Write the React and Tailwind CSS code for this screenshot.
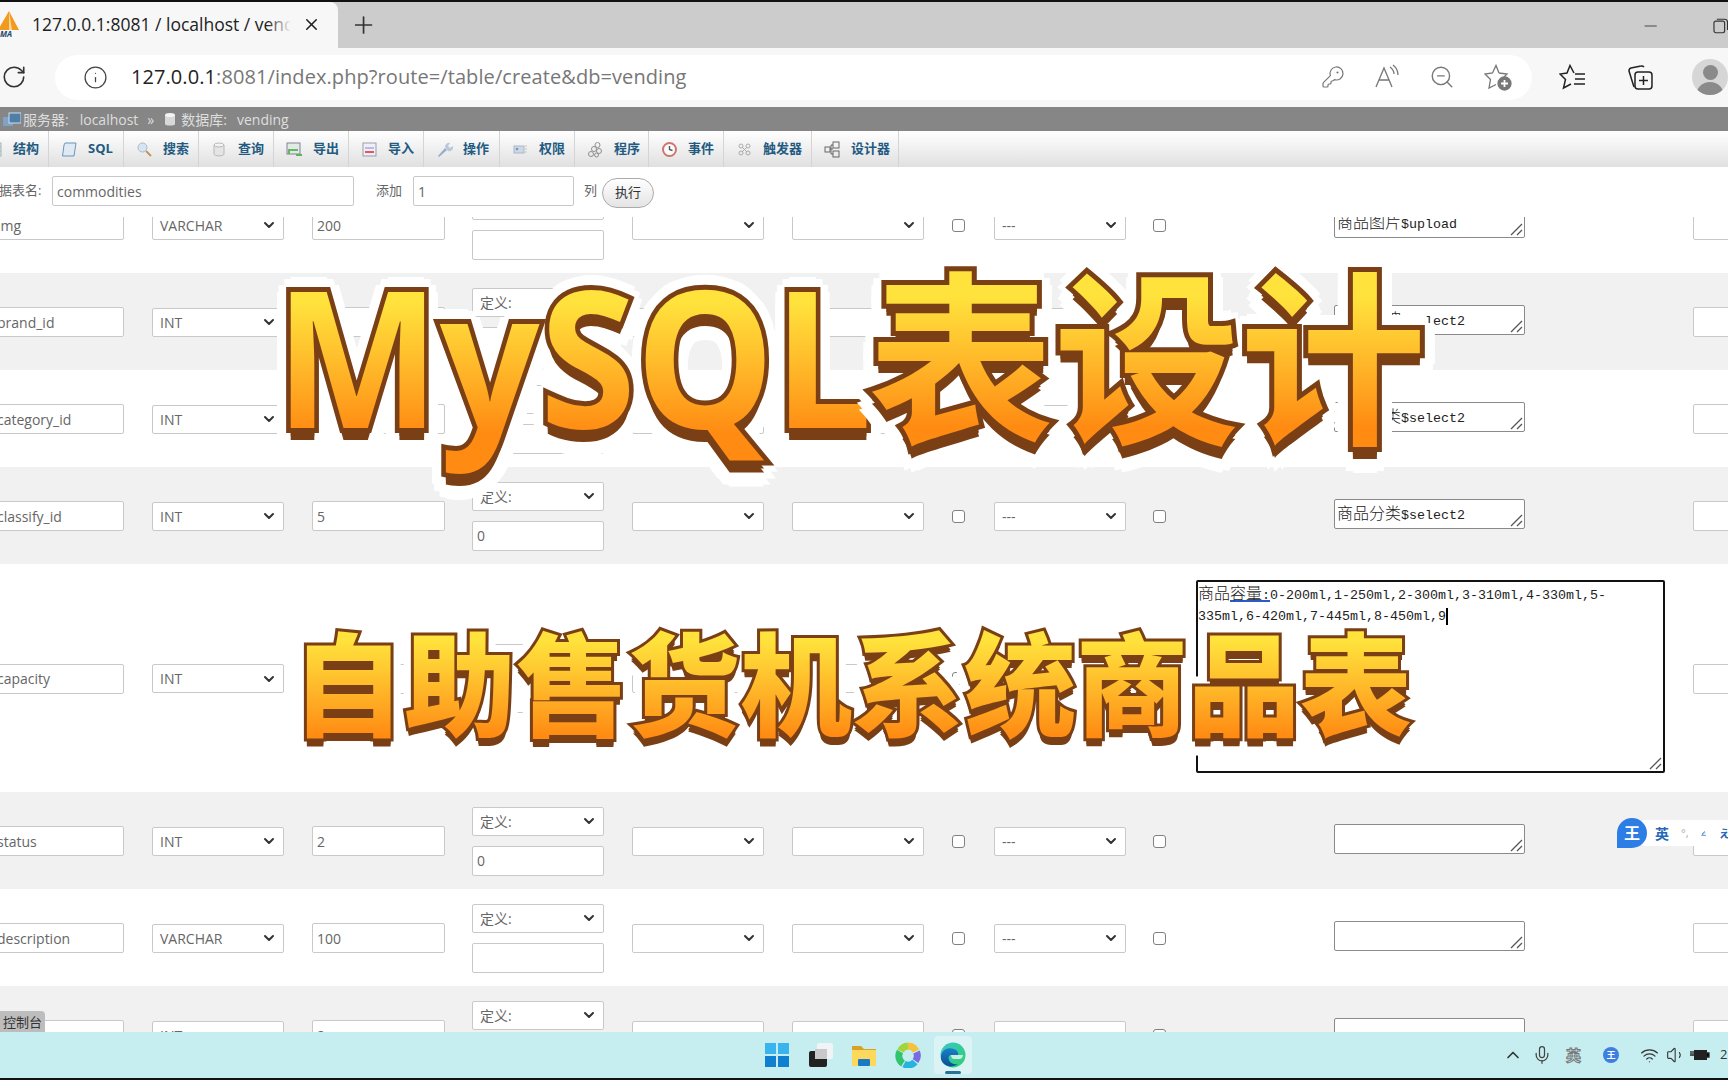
import React from "react";
import { RotateCw, Info, KeyRound, ZoomOut, Plus, X, ChevronDown, ChevronUp, Mic, Wifi, Volume1, Minus } from "lucide-react";

const sans = "font-['Open_Sans','Noto_Sans_CJK_SC',sans-serif]";

function Chevron() {
  return <ChevronDown size={16} strokeWidth={3} className="text-[#333] shrink-0" />;
}

function Sel({ text, className = "" }) {
  return (
    <div className={`h-[29px] bg-white border border-[#c9c9c9] rounded-[2px] flex items-center justify-between pl-[7px] pr-[6px] text-[14px] text-[#666] shrink-0 ${className}`}>
      <span>{text}</span>
      <Chevron />
    </div>
  );
}

function Inp({ text, className = "" }) {
  return (
    <div className={`h-[30px] bg-white border border-[#c9c9c9] rounded-[2px] flex items-center pl-[4px] text-[14px] text-[#666] shrink-0 overflow-hidden ${className}`}>
      {text}
    </div>
  );
}

function Check({ className = "" }) {
  return <div className={`w-[13px] h-[13px] bg-white border border-[#808080] rounded-[3px] shrink-0 ${className}`} />;
}

function Grip() {
  return (
    <svg width="14" height="14" viewBox="0 0 14 14" className="absolute right-[1px] bottom-[1px]">
      <path d="M2 13 L13 2 M8 13 L13 8" stroke="#555" strokeWidth="1.3" fill="none" />
    </svg>
  );
}

function Comment({ text }) {
  const m = text.match(/^([^$]*)(.*)$/);
  return (
    <div className="relative ml-[168px] mb-[4px] w-[191px] h-[30px] shrink-0 bg-white border border-[#8a8a8a] rounded-[2px] pl-[2px] leading-[24px] text-[#222] whitespace-nowrap overflow-hidden">
      <span className="text-[16px] font-['Noto_Sans_CJK_SC',sans-serif] font-light">{m[1]}</span>
      <span className="text-[13.33px] font-['Liberation_Mono',monospace]">{m[2]}</span>
      <Grip />
    </div>
  );
}

function CapacityBox() {
  const cjk = "text-[16px] font-['Noto_Sans_CJK_SC',sans-serif] font-light";
  return (
    <div className="relative ml-[30px] mb-[4px] w-[469px] h-[193px] shrink-0 bg-white border-2 border-[#111] rounded-[2px] leading-[20px] text-[13.33px] text-[#222] font-['Liberation_Mono',monospace] whitespace-nowrap">
      <div className="h-[25px]">
        <span className={cjk}>商品</span>
        <span className={`${cjk} underline decoration-[#2a5bc8] decoration-2`}>容量</span>
        <span className="underline decoration-[#2a5bc8] decoration-2">:</span>
        0-200ml,1-250ml,2-300ml,3-310ml,4-330ml,5-
      </div>
      <div className="h-[24px] flex items-start">
        335ml,6-420ml,7-445ml,8-450ml,9<span className="inline-block w-[2px] h-[17px] mt-[1px] bg-black" />
      </div>
      <Grip />
    </div>
  );
}

function Row({ name, type, len, def, defVal, comment, big, gray, h = "h-[97px]", extra = "" }) {
  return (
    <div className={`${h} shrink-0 flex items-center pt-[1px] ${gray ? "bg-[#f1f1f1]" : "bg-white"} ${extra}`}>
      <Inp text={name} className="-ml-[12px] w-[136px] pl-[8px]" />
      <Sel text={type} className="ml-[28px] w-[132px]" />
      <Inp text={len} className="ml-[28px] w-[133px]" />
      <div className="ml-[27px] w-[132px] shrink-0 flex flex-col gap-[10px]">
        <Sel text={def} className="w-[132px] text-[13px]" />
        <Inp text={defVal} className="w-[132px]" />
      </div>
      <Sel text="" className="ml-[28px] w-[132px]" />
      <Sel text="" className="ml-[28px] w-[132px]" />
      <Check className="ml-[28px]" />
      <Sel text="---" className="ml-[29px] w-[132px]" />
      <Check className="ml-[27px]" />
      {big ? <CapacityBox /> : <Comment text={comment} />}
      <Inp text="" className={`${big ? "ml-[28px]" : "ml-[168px]"} w-[100px]`} />
    </div>
  );
}

function TabIcon({ kind }) {
  const c = { width: 17, height: 17, viewBox: "0 0 17 17", className: "shrink-0 opacity-80" };
  switch (kind) {
    case "struct":
      return <svg {...c}><rect x="1" y="2" width="14" height="13" fill="#dfe6ec" stroke="#8aa" /><path d="M1 6h14M1 10h14M6 2v13" stroke="#8aa" /></svg>;
    case "sql":
      return <svg {...c}><path d="M4 2h11l-2 13H1.500L3 4z" fill="#dce9f5" stroke="#4d7fa8" /></svg>;
    case "search":
      return <svg {...c}><circle cx="6.500" cy="6.500" r="4.500" fill="#cfe3f5" stroke="#9ab" /><path d="M10 10l5 5" stroke="#b8803a" strokeWidth="2" /></svg>;
    case "db":
      return <svg {...c}><path d="M3 4v9c0 2.500 10 2.500 10 0V4z" fill="#e3e3e3" stroke="#aaa" /><ellipse cx="8" cy="4" rx="5" ry="2" fill="#f4f4f4" stroke="#aaa" /></svg>;
    case "export":
      return <svg {...c}><rect x="1" y="2" width="13" height="11" fill="#dfe9e3" stroke="#668" /><path d="M3 13V9h9" stroke="#4a4" strokeWidth="2" fill="none" /><path d="M10 14h6" stroke="#3a3" strokeWidth="2" /></svg>;
    case "import":
      return <svg {...c}><rect x="2" y="2" width="13" height="13" fill="#eef" stroke="#889" /><path d="M4 11h9" stroke="#d33" strokeWidth="2" /><path d="M4 7h9" stroke="#99c" strokeWidth="1.500" /></svg>;
    case "wrench":
      return <svg {...c}><path d="M2 15l7-8 2 2-8 7z" fill="#7f9ec2" /><path d="M9 6a4 4 0 0 1 5-4l-2 3 2 2 3-2a4 4 0 0 1-5 5z" fill="#a9bfd6" /></svg>;
    case "priv":
      return <svg {...c}><rect x="2" y="5" width="10" height="7" fill="#c5d3e6" stroke="#9ab" /><circle cx="5" cy="8" r="1.300" fill="#5a7fae" /><path d="M13 5h2M13 8h2M13 11h2" stroke="#bbb" /></svg>;
    case "routine":
      return <svg {...c} fill="none" stroke="#777"><circle cx="10.500" cy="4" r="2.500" /><circle cx="12" cy="10" r="2.500" /><circle cx="7" cy="8" r="2.500" /><circle cx="4" cy="13" r="2.500" /><circle cx="9.500" cy="14" r="2" /></svg>;
    case "clock":
      return <svg {...c}><circle cx="8.500" cy="8.500" r="6.500" fill="#fff" stroke="#c9574f" strokeWidth="2" /><path d="M8.500 5v3.500l3 1" stroke="#333" strokeWidth="1.400" fill="none" /></svg>;
    case "trigger":
      return <svg {...c} fill="none" stroke="#999"><circle cx="5" cy="5" r="2" /><circle cx="12" cy="5" r="2" /><circle cx="5" cy="12" r="2" /><circle cx="12" cy="12" r="2" /><path d="M6 6l5 5M11 6l-5 5" /></svg>;
    default:
      return <svg {...c} fill="none" stroke="#444"><rect x="1" y="6" width="5" height="5" /><rect x="9" y="1" width="6" height="6" /><rect x="9" y="10" width="6" height="6" /><path d="M6 8h3M9 4H7v9h2" /></svg>;
  }
}

const tabs = [
  ["struct", "结构", "w-[75px]"],
  ["sql", "SQL", "w-[75px]"],
  ["search", "搜索", "w-[75px]"],
  ["db", "查询", "w-[75px]"],
  ["export", "导出", "w-[75px]"],
  ["import", "导入", "w-[75px]"],
  ["wrench", "操作", "w-[76px]"],
  ["priv", "权限", "w-[75px]"],
  ["routine", "程序", "w-[74px]"],
  ["clock", "事件", "w-[75px]"],
  ["trigger", "触发器", "w-[88px]"],
  ["designer", "设计器", "w-[87px]"],
];

function FancyLine({ className, halo, extrude, fill, children }) {
  return (
    <div className={`absolute whitespace-nowrap grid ${className}`}>
      <div aria-hidden="true" className={`[grid-area:1/1] ${halo}`}>{children}</div>
      <div aria-hidden="true" className={`[grid-area:1/1] ${extrude}`}>{children}</div>
      <div className={`[grid-area:1/1] ${fill}`}>{children}</div>
    </div>
  );
}

const haloBig = "text-white [text-shadow:15px_0_0_#fff,13px_7px_0_#fff,7px_13px_0_#fff,0_15px_0_#fff,-7px_13px_0_#fff,-13px_7px_0_#fff,-15px_0_0_#fff,-13px_-7px_0_#fff,-7px_-13px_0_#fff,0_-15px_0_#fff,7px_-13px_0_#fff,13px_-7px_0_#fff,0_26px_0_#fff,13px_18px_0_#fff,-13px_18px_0_#fff,7px_24px_0_#fff,-7px_24px_0_#fff,15px_11px_0_#fff,-15px_11px_0_#fff,8px_0_0_#fff,-8px_0_0_#fff,0_8px_0_#fff,0_-8px_0_#fff]";
const extrudeBig = "text-[#7a3f14] [-webkit-text-stroke:10px_#7a3f14] [stroke-linejoin:round] [text-shadow:0_4px_0_#7a3f14,0_8px_0_#7a3f14,0_12px_0_#7a3f14]";
const fillGrad = "text-transparent bg-clip-text bg-linear-to-b from-[#ffe23c] from-30% to-[#ff8b12] to-80%";

function EdgeLogo() {
  return (
    <svg width="26" height="26" viewBox="0 0 26 26">
      <defs>
        <linearGradient id="e1" x1="0" y1="0" x2="1" y2="1"><stop offset="0" stopColor="#38c6c8" /><stop offset="1" stopColor="#2fd06f" /></linearGradient>
        <linearGradient id="e2" x1="0" y1="0" x2="0" y2="1"><stop offset="0" stopColor="#1a7fc9" /><stop offset="1" stopColor="#0b4f94" /></linearGradient>
      </defs>
      <circle cx="13" cy="13" r="12.500" fill="url(#e1)" />
      <path d="M1 14c1-7 8-9 13-7 3 1 5 4 4 6h-7c-2 0-3 2-2 5 1 3 5 5 9 4-3 2-7 3-10 2-4-1-8-5-7-10z" fill="url(#e2)" />
      <path d="M11 13h12c0 1-1 4-3 4h-6c-2 0-3-2-3-4z" fill="#d6f2ee" opacity="0.9" />
    </svg>
  );
}

export default function App() {
  return (
    <div className={`relative w-[1728px] h-[1080px] overflow-hidden bg-white flex flex-col ${sans}`}>
      {/* tab strip */}
      <div className="h-[48px] shrink-0 bg-[#cccccc] border-t-[2px] border-[#111] flex items-end">
        <div className="w-[338px] h-[46px] bg-[#f7f7f7] rounded-tr-[8px] flex items-center shrink-0 pb-[2px]">
          <svg width="20" height="28" viewBox="0 0 20 28" className="shrink-0">
            <path d="M-2 20 L9 1 L19 20 Z" fill="#f29a1c" />
            <path d="M9 1 L12 20 L9 20 Z" fill="#fff" opacity="0.6" />
            <text x="0" y="27" fontSize="8" fontWeight="700" fontStyle="italic" fill="#22496e" fontFamily="Open Sans">MA</text>
          </svg>
          <div className="ml-[12px] w-[259px] text-[17.500px] text-[#222] whitespace-nowrap overflow-hidden relative">
            127.0.0.1:8081 / localhost / vending
            <div className="absolute right-0 top-0 bottom-0 w-[24px] bg-linear-to-r from-transparent to-[#f7f7f7]" />
          </div>
          <X size={19} strokeWidth={2} className="ml-[11px] text-[#222]" />
        </div>
        <Plus size={28} strokeWidth={1.500} className="ml-[12px] mb-[9px] text-[#333]" />
        <Minus size={20} strokeWidth={1.200} className="ml-[1264px] mb-[12px] text-[#444]" />
        <svg width="16" height="16" viewBox="0 0 16 16" className="ml-[52px] mb-[14px]" fill="none" stroke="#333" strokeWidth="1.200">
          <rect x="1" y="3" width="11" height="12" rx="2" />
          <path d="M4 1h8a3 3 0 0 1 3 3v8" />
        </svg>
      </div>

      {/* address bar */}
      <div className="h-[59px] shrink-0 bg-[#f7f7f7] flex items-center pb-[1px]">
        <RotateCw size={26} strokeWidth={1.500} className="ml-[1px] text-[#333]" />
        <div className="ml-[28px] w-[1479px] h-[45px] bg-white rounded-[23px] flex items-center">
          <Info size={25} strokeWidth={1.200} className="ml-[28px] text-[#444]" />
          <div className="ml-[23px] text-[20px] text-[#777] whitespace-nowrap tracking-[0.08px]">
            <span className="text-[#222]">127.0.0.1</span>:8081/index.php?route=/table/create&amp;db=vending
          </div>
          <div className="ml-auto mr-[20px] flex items-center gap-[29px] text-[#777]">
            <KeyRound size={24} strokeWidth={1.200} />
            <svg width="26" height="26" viewBox="0 0 26 26" fill="none" stroke="currentColor" strokeWidth="1.300">
              <path d="M2 23 L10 4 L18 23 M5 16 H15" />
              <path d="M16 3 q4 3 4 7 M19 1 q5 4 5 10" />
            </svg>
            <ZoomOut size={26} strokeWidth={1.300} />
            <svg width="28" height="28" viewBox="0 0 28 28" fill="none" stroke="currentColor" strokeWidth="1.300">
              <path d="M15 10 L12 2.500 L8.500 10 L1 11 L6.500 16.500 L5 25 L12 21.500 M15 10 L23 11 L20 14" />
              <circle cx="20.500" cy="20.500" r="6.500" fill="currentColor" />
              <path d="M20.500 17v7M17 20.500h7" stroke="#fff" strokeWidth="1.800" />
            </svg>
          </div>
        </div>
        <svg width="28" height="28" viewBox="0 0 28 28" fill="none" stroke="#222" strokeWidth="1.500" className="ml-[27px]">
          <path d="M15 10 L11 2.500 L8 10 L1 11 L6.500 16.500 L4.500 25 L12 21" />
          <path d="M16 11h10M16 16h10M15 21h11" />
        </svg>
        <svg width="28" height="28" viewBox="0 0 28 28" fill="none" stroke="#222" strokeWidth="1.500" className="ml-[39px]">
          <path d="M8 24 L3 8 a3 3 0 0 1 2-3 l10-2 a3 3 0 0 1 3 1" />
          <rect x="9" y="9" width="17" height="17" rx="3" />
          <path d="M17.500 13v9M13 17.500h9" />
        </svg>
        <div className="ml-[38px] w-[36px] h-[36px] rounded-full bg-[#d6d6d6] relative overflow-hidden shrink-0">
          <div className="w-[15px] h-[15px] rounded-full bg-[#8a8a8a] mx-auto mt-[6px]" />
          <div className="w-[28px] h-[16px] rounded-t-full bg-[#8a8a8a] mx-auto mt-[2px]" />
        </div>
      </div>

      {/* breadcrumb */}
      <div className="h-[24px] shrink-0 bg-[#868686] flex items-center pt-[1px] text-[14px] text-[#dedede] whitespace-nowrap">
        <svg width="18" height="15" viewBox="0 0 18 15" className="ml-[3px]"><rect x="0" y="5" width="10" height="9" fill="#7fa3c7" /><rect x="6" y="1" width="12" height="10" fill="#4f7ea8" stroke="#cde" /></svg>
        <span className="ml-[2px]">服务器:</span>
        <span className="ml-[11px]">localhost</span>
        <span className="ml-[9px]">»</span>
        <svg width="12" height="13" viewBox="0 0 12 13" className="ml-[10px]"><path d="M1 2v9c0 2 10 2 10 0V2z" fill="#d8d8d8" /><ellipse cx="6" cy="2" rx="5" ry="2" fill="#f4f4f4" /></svg>
        <span className="ml-[5px]">数据库:</span>
        <span className="ml-[10px]">vending</span>
      </div>

      {/* tabs */}
      <div className="h-[36px] shrink-0 bg-linear-to-b from-white to-[#e0e0e0] flex items-stretch -ml-[26px]">
        {tabs.map(([k, t, w]) => (
          <div key={t} className={`${w} shrink-0 border-r border-[#d4d4d4] flex items-center pl-[12px] gap-[10px]`}>
            <TabIcon kind={k} />
            <span className="text-[13px] font-bold text-[#235a81] whitespace-nowrap">{t}</span>
          </div>
        ))}
      </div>

      {/* table name form */}
      <div className="relative z-10 h-[50px] shrink-0 bg-white flex items-center pb-[2px] -ml-[14px] text-[13px] text-[#666] whitespace-nowrap">
        <span className="w-[66px] shrink-0">数据表名:</span>
        <Inp text="commodities" className="w-[302px]" />
        <span className="ml-[22px] w-[37px] shrink-0">添加</span>
        <Inp text="1" className="w-[161px]" />
        <span className="ml-[10px]">列</span>
        <div className="ml-[5px] w-[52px] h-[30px] mt-[4px] rounded-[15px] border border-[#aaa] bg-linear-to-b from-white to-[#e4e4e4] flex items-center justify-center text-[#333]">执行</div>
      </div>

      {/* rows */}
      <div className="flex-1 min-h-0 overflow-hidden flex flex-col">
        <Row extra="-mt-[41px]" name="img" type="VARCHAR" len="200" def="定义:" defVal="" comment="商品图片$upload" />
        <Row gray name="brand_id" type="INT" len="5" def="定义:" defVal="0" comment="商品品牌$select2" />
        <Row name="category_id" type="INT" len="5" def="定义:" defVal="0" comment="商品分类$select2" />
        <Row gray name="classify_id" type="INT" len="5" def="定义:" defVal="0" comment="商品分类$select2" />
        <Row h="h-[228px]" big name="capacity" type="INT" len="2" def="定义:" defVal="0" />
        <Row gray name="status" type="INT" len="2" def="定义:" defVal="0" comment="" />
        <Row name="description" type="VARCHAR" len="100" def="定义:" defVal="" comment="" />
        <Row gray name="" type="INT" len="2" def="定义:" defVal="0" comment="" />
      </div>

      {/* taskbar */}
      <div className="relative z-10 h-[46px] shrink-0 bg-[#c6eef0] flex items-center">
        <div className="ml-[765px] grid grid-cols-2 gap-[1.500px] w-[24px] h-[24px] shrink-0">
          <div className="bg-[#3ab4ee]" /><div className="bg-[#3ab4ee]" /><div className="bg-[#0f7fd0]" /><div className="bg-[#0f7fd0]" />
        </div>
        <div className="ml-[20px] relative w-[24px] h-[24px] shrink-0">
          <div className="absolute right-0 top-0 w-[16px] h-[16px] bg-[#f0f4f4] rounded-[2px]" />
          <div className="absolute left-0 bottom-0 w-[18px] h-[16px] bg-[#222] rounded-[2px]" />
          <div className="absolute left-[6px] top-[6px] w-[12px] h-[10px] bg-[#c8c8c8]" />
        </div>
        <svg width="26" height="26" viewBox="0 0 26 26" className="ml-[18px] shrink-0">
          <path d="M1 4h9l3 3h12v17H1z" fill="#d9a127" />
          <rect x="1" y="8" width="24" height="16" fill="#fcd95c" />
          <rect x="7" y="17" width="12" height="7" fill="#1b78c2" rx="1" />
        </svg>
        <svg width="26" height="26" viewBox="0 0 26 26" className="ml-[18px] shrink-0" fill="none" strokeWidth="7">
          <path d="M13 4a9 9 0 0 1 8 5" stroke="#f5c33b" />
          <path d="M21.500 10a9 9 0 0 1-1 9" stroke="#7a6be0" />
          <path d="M20 20a9 9 0 0 1-11 2" stroke="#27b3e0" />
          <path d="M8 21.500a9 9 0 0 1-3-12" stroke="#2fc46d" />
          <path d="M5.500 9a9 9 0 0 1 7.500-5" stroke="#a4d43c" />
        </svg>
        <div className="ml-[13px] w-[38px] h-[38px] rounded-[4px] bg-[#dbf3f5] relative flex items-center justify-center shrink-0">
          <EdgeLogo />
          <div className="absolute bottom-0 left-[11px] w-[16px] h-[3px] rounded-full bg-[#2a6f96]" />
        </div>
        <ChevronUp size={20} strokeWidth={2} className="ml-[531px] text-[#333]" />
        <Mic size={20} strokeWidth={1.500} className="ml-[9px] text-[#444]" />
        <span className="ml-[14px] text-[15px] font-bold text-[#c6eef0] [-webkit-text-stroke:1px_#777]">英</span>
        <div className="ml-[22px] w-[16px] h-[16px] rounded-full bg-[#3d7fe0] text-white text-[9px] font-bold flex items-center justify-center shrink-0">王</div>
        <Wifi size={19} strokeWidth={1.500} className="ml-[21px] text-[#333]" />
        <Volume1 size={20} strokeWidth={1.300} className="ml-[7px] text-[#333]" />
        <svg width="20" height="14" viewBox="0 0 20 14" className="ml-[4px] shrink-0"><rect x="4" y="2" width="13" height="10" fill="#222" /><path d="M17 5h2v4h-2M0 7h4M1 3v3M3 3v3" stroke="#222" strokeWidth="1.300" /></svg>
        <span className="ml-[10px] text-[13px] text-[#333]">2</span>
      </div>
      <div className="h-[2px] shrink-0 bg-[#111]" />

      {/* console tab, over the last row */}
      <div className="absolute left-0 top-[1011px] w-[45px] h-[23px] bg-[#bdbdbd] rounded-tr-[4px] flex items-center justify-center text-[13px] text-[#333]">控制台</div>

      {/* IME floating bar */}
      <div className="absolute left-[1617px] top-[818px] flex items-center">
        <div className="relative z-10 w-[30px] h-[30px] rounded-full rounded-bl-[8px] bg-[#2d7de6] text-white text-[16px] font-bold flex items-center justify-center">王</div>
        <div className="-ml-[6px] w-[90px] h-[26px] bg-white rounded-l-[4px] flex items-center pl-[14px] gap-[12px] text-[#2668b8]">
          <span className="text-[14px] font-bold">英</span>
          <span className="text-[11px] text-[#aaa]">°,</span>
          <svg width="16" height="16" viewBox="0 0 16 16" fill="none" stroke="#2668b8" strokeWidth="2"><path d="M3 11l7-7 2 2-7 7zM1 15h14" /></svg>
          <span className="text-[13px] font-bold">ぇ</span>
        </div>
      </div>

      {/* video title overlay */}
      <FancyLine
        className="left-[275px] top-[225px] origin-left scale-x-[0.92] font-['Noto_Sans',sans-serif] font-bold text-[190px] leading-[260px]"
        halo={haloBig}
        extrude={extrudeBig}
        fill={fillGrad}
      >
        MySQL
      </FancyLine>
      <FancyLine
        className="left-[868px] top-[219px] font-['Noto_Sans_CJK_SC',sans-serif] font-bold text-[186px] leading-[260px]"
        halo={haloBig}
        extrude={extrudeBig}
        fill={fillGrad}
      >
        表设计
      </FancyLine>
      <FancyLine
        className="left-[292px] top-[584px] font-['Noto_Sans_CJK_SC',sans-serif] font-black text-[112px] leading-[190px]"
        halo="text-white [text-shadow:10px_0_0_#fff,9px_5px_0_#fff,5px_9px_0_#fff,0_10px_0_#fff,-5px_9px_0_#fff,-9px_5px_0_#fff,-10px_0_0_#fff,-9px_-5px_0_#fff,-5px_-9px_0_#fff,0_-10px_0_#fff,5px_-9px_0_#fff,9px_-5px_0_#fff,0_17px_0_#fff,8px_13px_0_#fff,-8px_13px_0_#fff]"
        extrude="text-[#7a3f14] [-webkit-text-stroke:6px_#7a3f14] [stroke-linejoin:round] [text-shadow:0_3px_0_#7a3f14,0_6px_0_#7a3f14,0_8px_0_#7a3f14]"
        fill={fillGrad}
      >
        自助售货机系统商品表
      </FancyLine>
    </div>
  );
}
